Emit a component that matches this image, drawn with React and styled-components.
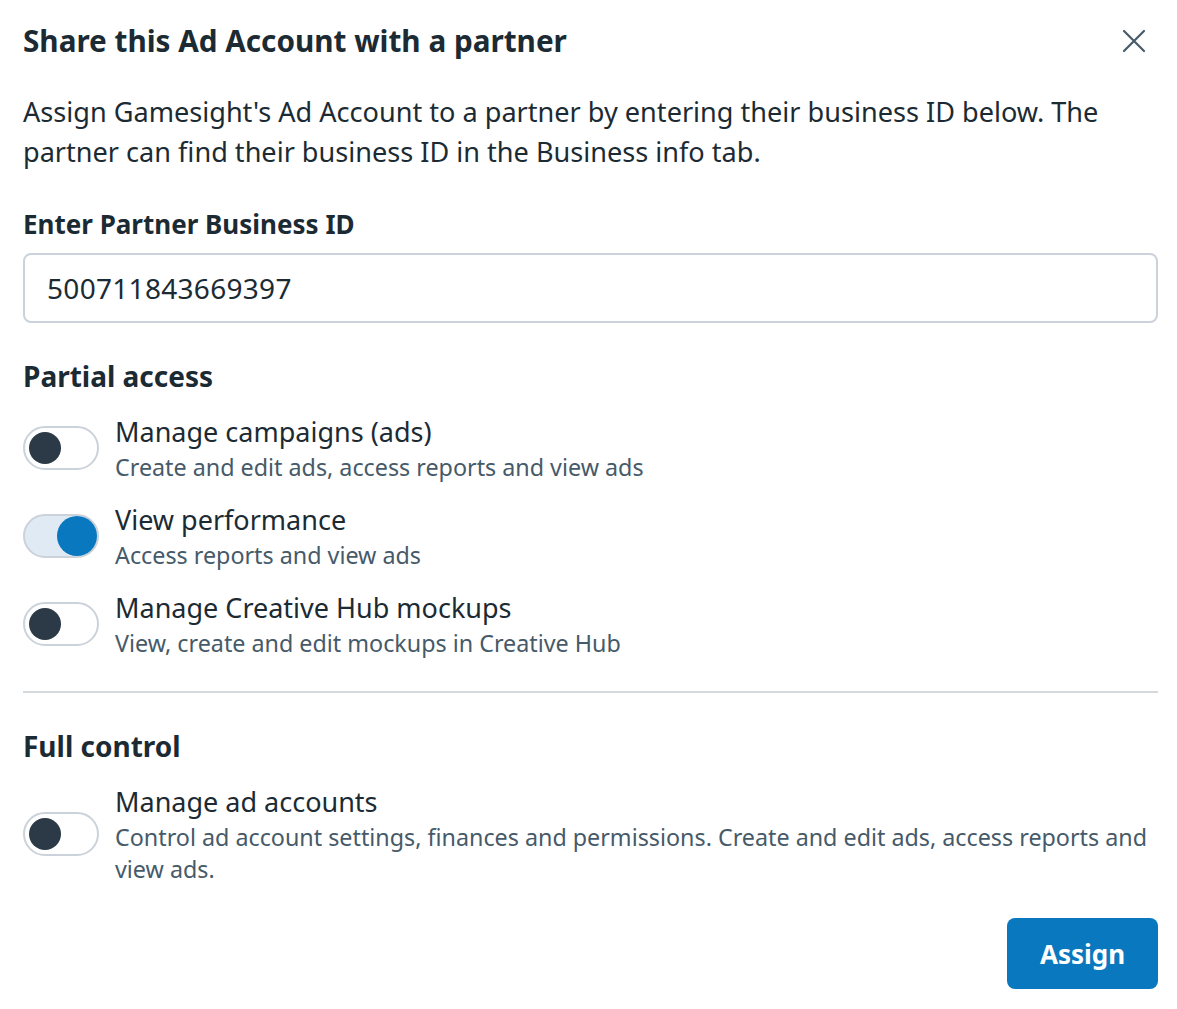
import React from "react";
import styled, { createGlobalStyle } from "styled-components";

const Global = createGlobalStyle`
  html, body { margin: 0; padding: 0; background: #ffffff; }
  body { font-family: "Noto Sans", Roboto, "Liberation Sans", sans-serif; color: #1c2b33; }
  * { box-sizing: border-box; }
`;

const Dialog = styled.div`
  width: 1177px;
  padding: 23px 19px 20px 23px;
  display: flex;
  flex-direction: column;
`;

const Header = styled.div`
  display: flex;
  align-items: center;
  justify-content: space-between;
  height: 36px;
`;

const Title = styled.h1`
  margin: 0;
  font-size: 29.7px;
  line-height: 36px;
  font-weight: 700;
  color: #1c2b33;
`;

const CloseButton = styled.button`
  width: 36px;
  height: 36px;
  margin-right: 6px;
  border: none;
  background: transparent;
  padding: 0;
  display: flex;
  align-items: center;
  justify-content: center;
  color: #465a69;
  cursor: pointer;
`;

const Paragraph = styled.p`
  margin: 33px 0 0;
  font-size: 27.1px;
  line-height: 40px;
  color: #1c2b33;
`;

const Label = styled.label`
  display: block;
  margin-top: ${(p) => p.$mt}px;
  font-size: ${(p) => p.$size || 26}px;
  line-height: 36px;
  font-weight: 700;
  color: #1c2b33;
`;

const Input = styled.input`
  margin-top: 11px;
  width: 100%;
  height: 70px;
  border: 2px solid #cbd2d9;
  border-radius: 8px;
  padding: 0 22px;
  font-family: inherit;
  font-size: 28px;
  letter-spacing: 0.3px;
  color: #1c2b33;
  outline: none;
`;

const Options = styled.div`
  display: flex;
  flex-direction: column;
  gap: 18px;
  margin-top: 19px;
`;

const Option = styled.div`
  display: flex;
  align-items: center;
  gap: 16px;
`;

const Track = styled.div`
  flex: none;
  position: relative;
  width: 76px;
  height: 44px;
  border-radius: 22px;
  border: 2px solid #cbd2d9;
  background: ${(p) => (p.$on ? "#dfeaf4" : "#ffffff")};
  display: flex;
  align-items: center;
  justify-content: ${(p) => (p.$on ? "flex-end" : "flex-start")};
  padding: 0 ${(p) => (p.$on ? 0 : 4)}px;
`;

const Knob = styled.div`
  width: ${(p) => (p.$on ? 40 : 32)}px;
  height: ${(p) => (p.$on ? 40 : 32)}px;
  border-radius: 50%;
  background: ${(p) => (p.$on ? "#0a78be" : "#2b3a46")};
`;

const OptionText = styled.div`
  display: flex;
  flex-direction: column;
`;

const OptionTitle = styled.div`
  font-size: 27px;
  line-height: 38px;
  color: #1c2b33;
`;

const OptionSub = styled.div`
  font-size: 23.3px;
  line-height: 32px;
  color: #465a69;
`;

const Divider = styled.hr`
  margin: 32px 0 0;
  border: none;
  border-top: 2px solid #d4d9de;
`;

const Footer = styled.div`
  display: flex;
  justify-content: flex-end;
  margin-top: 33px;
`;

const PrimaryButton = styled.button`
  width: 151px;
  height: 71px;
  border: none;
  border-radius: 8px;
  background: #0a78be;
  color: #ffffff;
  font-family: inherit;
  font-size: 26px;
  font-weight: 700;
  cursor: pointer;
`;

function Toggle({ on }) {
  return (
    <Track $on={on}>
      <Knob $on={on} />
    </Track>
  );
}

function OptionRow({ on, title, sub }) {
  return (
    <Option>
      <Toggle on={on} />
      <OptionText>
        <OptionTitle>{title}</OptionTitle>
        <OptionSub>{sub}</OptionSub>
      </OptionText>
    </Option>
  );
}

export default function App() {
  return (
    <>
      <Global />
      <Dialog>
        <Header>
          <Title>Share this Ad Account with a partner</Title>
          <CloseButton aria-label="Close">
            <svg width="24" height="24" viewBox="0 0 24 24" fill="none" stroke="currentColor" strokeWidth="2.2" strokeLinecap="round">
              <path d="M2 2 L22 22 M22 2 L2 22" />
            </svg>
          </CloseButton>
        </Header>
        <Paragraph>
          Assign Gamesight's Ad Account to a partner by entering their business ID below. The partner can find their business ID in the Business info tab.
        </Paragraph>
        <Label $mt={34}>Enter Partner Business ID</Label>
        <Input defaultValue="500711843669397" />
        <Label $mt={35} $size={28}>Partial access</Label>
        <Options>
          <OptionRow on={false} title="Manage campaigns (ads)" sub="Create and edit ads, access reports and view ads" />
          <OptionRow on={true} title="View performance" sub="Access reports and view ads" />
          <OptionRow on={false} title="Manage Creative Hub mockups" sub="View, create and edit mockups in Creative Hub" />
        </Options>
        <Divider />
        <Label $mt={35} $size={28}>Full control</Label>
        <Options>
          <OptionRow
            on={false}
            title="Manage ad accounts"
            sub="Control ad account settings, finances and permissions. Create and edit ads, access reports and view ads."
          />
        </Options>
        <Footer>
          <PrimaryButton>Assign</PrimaryButton>
        </Footer>
      </Dialog>
    </>
  );
}
